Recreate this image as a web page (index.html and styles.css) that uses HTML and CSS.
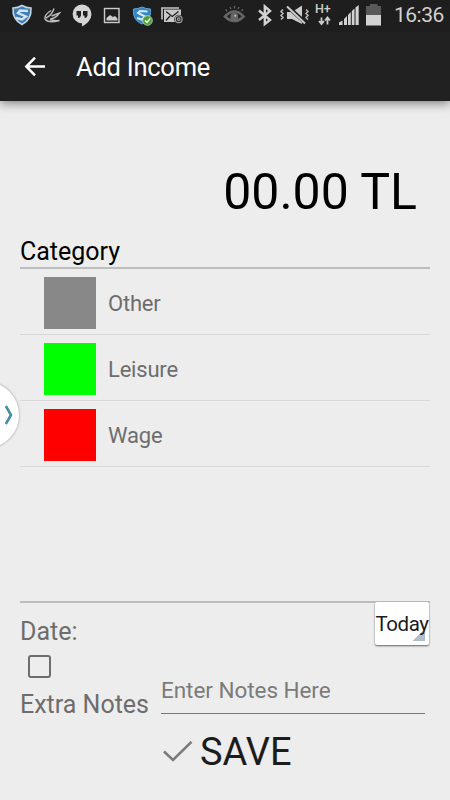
FILE: index.html
```
<!DOCTYPE html>
<html>
<head>
    <meta charset="utf-8">
    <title>Add Income</title>
    <link rel="stylesheet" href="styles.css">
</head>
<body>
    <div class="statusBar">
        <svg class="notifications" width="190" height="32" viewBox="0 0 190 32">
            <!-- shield -->
            <path d="M22 5.500Q26 8 31 8C31.500 16 29 21 22 24.500C15 21 12.500 16 13 8Q18 8 22 5.500Z" fill="#3c7db5" stroke="#c3d4df" stroke-width="1.600"/>
            <path d="M28 11L20 10.500L18 13L26 16.500L22 19.500L16 18" fill="none" stroke="#d5e2ea" stroke-width="2.400"/>
            <!-- bird -->
            <path d="M51 10.500Q44 15 45 19Q48 23.500 59.500 20.500Q53 21 50 19.500M46 18Q52 15 54 8.500M50.500 19Q56 18 59.500 13L51.500 16" fill="none" stroke="#bbb" stroke-width="1.400"/>
            <!-- hangouts -->
            <path d="M82 4.500A9.400 9.400 0 0 0 82 23.300V26.500C88 23.500 91.400 19 91.400 14A9.400 9.400 0 0 0 82 4.500Z" fill="#d4d4d4"/>
            <path d="M76.500 11H81V15.500Q80.500 18 78 18V15.500H76.500ZM83 11H87.500V15.500Q87 18 84.500 18V15.500H83Z" fill="#202020"/>
            <!-- image -->
            <rect x="104.500" y="8.500" width="14.500" height="14" fill="none" stroke="#ccc" stroke-width="1.400"/>
            <path d="M106.500 20.500V18L110 15L113 17L115 16L117.500 18.500V20.500Z" fill="#ccc"/>
            <!-- shield with tick -->
            <path d="M142 7Q146 9 150.500 9C151 16 149 21 142 24C135 21 133 16 133.500 9Q138 9 142 7Z" fill="#3185c9" stroke="#68a5d3"/>
            <path d="M147.500 11.500L140 11L138 13L145 16.500L142 19.500L137 18" fill="none" stroke="#dce9f2" stroke-width="2"/>
            <circle cx="147.500" cy="20.500" r="4.800" fill="#4d9e36" stroke="#c8dcc2" stroke-width=".8"/>
            <path d="M145 20.500L147 22.500L150.200 18.500" fill="none" stroke="#fff" stroke-width="1.400"/>
            <!-- mail -->
            <path d="M162 19.500V8H179" fill="none" stroke="#c8c8c8" stroke-width="1.600"/>
            <path d="M164 9.500H181V16L175 22H164Z" fill="#c8c8c8"/>
            <path d="M166 11.500L172.200 16.500L178.500 11.500M166 20.500L170 16" fill="none" stroke="#202020" stroke-width="1.300"/>
            <circle cx="178.700" cy="19.200" r="4.500" fill="#202020"/>
            <circle cx="178.700" cy="19.200" r="3.400" fill="none" stroke="#aaa" stroke-width="1.100"/>
            <circle cx="178.700" cy="19.200" r="1.300" fill="none" stroke="#aaa" stroke-width="1.100"/>
        </svg>
        <svg class="signals" width="170" height="32" viewBox="220 0 170 32">
            <!-- eye -->
            <path d="M225 16.500Q234.500 6.500 243.500 16.500Q234.500 25.500 225 16.500Z" fill="none" stroke="#666" stroke-width="2.600"/>
            <circle cx="234.300" cy="16.800" r="4" fill="#666"/>
            <circle cx="235.300" cy="15.800" r="1" fill="#ccc"/>
            <path d="M227 11L225.500 9.500M231 9L230 7M234.500 8.500V6M238 9L239 7M241.500 11L243 9.500" stroke="#666" stroke-width="1.300"/>
            <!-- bluetooth -->
            <path d="M259 10.500L270 20L264.800 24V6.500L270 11L259 20" fill="none" stroke="#d2d2d2" stroke-width="2.400"/>
            <!-- muted, vibrate -->
            <path d="M287 12H292L302 5.500V24L292 19H287Z" fill="#ccc"/>
            <path d="M286.500 5.500L305 22.500" stroke="#202020" stroke-width="4"/>
            <path d="M287 6.500L305 23.500" stroke="#ccc" stroke-width="2"/>
            <path d="M283 9.500L281 11.500L283 13.500L281 15.500L283 17.500L281 19.500M306 9.500L308 11.500L306 13.500L308 15.500L306 17.500L308 19.500" fill="none" stroke="#bbb" stroke-width="1.500"/>
            <!-- data arrows -->
            <path d="M321.500 17.500V23M319 21L321.500 24L324 21M327.500 24.500V18.500M325 20.500L327.500 17.500L330 20.500" fill="none" stroke="#ccc" stroke-width="1.800"/>
            <!-- reception -->
            <path d="M339 25V22.500L342.500 20.500V25ZM344 25V19L347 16V25ZM348 25V15L350.800 12V25ZM351.800 25V11L354.500 8.500V25ZM355.500 25V7.500L358.700 5V25Z" fill="#d2d2d2"/>
            <!-- battery -->
            <path d="M366 15V6H370V4H377.500V6H381V15Z" fill="#595959"/>
            <path d="M366 15H381V25.500H366Z" fill="#d2d2d2"/>
        </svg>
        <span class="network">H+</span>
        <span class="clock">16:36</span>
    </div>
    <div class="toolbar">
        <svg class="back" width="22" height="20" viewBox="0 0 22 20">
            <path d="M21 9.500H2.500M11 .7L2.300 9.500L11 18.300" fill="none" stroke="#fff" stroke-width="2.500"/>
        </svg>
        <h1>Add Income</h1>
    </div>

    <div class="content">
        <div class="amount">00.00 TL</div>
        <h2>Category</h2>
        <ul class="categories">
            <li><span class="swatch other"></span><span class="name">Other</span></li>
            <li><span class="swatch leisure"></span><span class="name">Leisure</span></li>
            <li><span class="swatch wage"></span><span class="name">Wage</span></li>
        </ul>
        <div class="dateRow">
            <label>Date:</label>
            <button class="today">Today</button>
        </div>
        <span class="checkbox"></span>
        <div class="notesRow">
            <label>Extra Notes</label>
            <div class="notesInput">Enter Notes Here</div>
        </div>
        <div class="save">
            <svg width="30" height="22" viewBox="0 0 30 22">
                <path d="M1 10.500L10 19L28.500 .8" fill="none" stroke="#7b7b7b" stroke-width="2.500"/>
            </svg>
            <span>SAVE</span>
        </div>
    </div>

    <div class="drawerHandle">
        <svg width="8" height="20" viewBox="0 0 8 20">
            <path d="M.8 1L6 10L.8 19" fill="none" stroke="#438fa4" stroke-width="2.600"/>
        </svg>
    </div>
</body>
</html>
```
FILE: styles.css
```
body {
    position: relative;
    width: 450px;
    height: 800px;
    margin: 0;
    overflow: hidden;
    background: #ededed;
    color: #6d6d6d;
    font-family: Roboto, sans-serif;
}

.statusBar {
    position: relative;
    display: flex;
    height: 32px;
    background: #1e1e1e;
}
.signals {
    margin-left: 30px;
}
.network {
    position: absolute;
    top: 2px;
    left: 315px;
    color: #ccc;
    font-size: 12.5px;
    font-weight: 500;
    line-height: 14px;
}
.clock {
    margin-left: 4px;
    color: #d2d2d2;
    font-size: 21px;
    letter-spacing: -.5px;
    line-height: 31px;
}

.toolbar {
    display: flex;
    align-items: center;
    height: 69px;
    padding-left: 24px;
    background: #212121;
    box-shadow: 0 2px 10px rgba(0, 0, 0, .5);
}
.toolbar h1 {
    margin: 0 0 0 30px;
    color: #fff;
    font-size: 25.5px;
    font-weight: 400;
    letter-spacing: -.25px;
}

.content {
    padding: 61px 20px 0;
}
.amount {
    padding-right: 13px;
    color: #000;
    font-size: 50px;
    line-height: 60px;
    text-align: right;
}
h2 {
    height: 31px;
    margin: 14px 0 0;
    border-bottom: 2px solid #bdbdbd;
    color: #000;
    font-size: 25px;
    font-weight: 400;
    line-height: 32px;
}
.categories {
    height: 332px;
    margin: 0;
    padding: 0;
    border-bottom: 2px solid #bdbdbd;
    list-style: none;
}
.categories li {
    display: flex;
    align-items: center;
    height: 65px;
    padding-left: 24px;
    border-bottom: 1px solid #d8d8d8;
    font-size: 22px;
    letter-spacing: -.2px;
}
.swatch {
    width: 52px;
    height: 52px;
    margin: 2px 12px 0 0;
}
.name {
    padding-top: 3px;
}
.other {background: #888;}
.leisure {background: #0f0;}
.wage {background: #f00;}

.dateRow {
    display: flex;
    justify-content: space-between;
    height: 52px;
    font-size: 25px;
}
.dateRow label {
    padding-top: 14px;
}
.today {
    width: 54px;
    height: 43px;
    margin: -1px 1px 0 0;
    padding: 0;
    border: none;
    border-radius: 2px;
    background: linear-gradient(135deg, transparent 50%, #afbfcc 50%) 37px 26px / 13px 13px no-repeat #fff;
    box-shadow: 0 1px 2px rgba(0, 0, 0, .6);
    color: #1c1c1c;
    font-family: inherit;
    font-size: 20.5px;
    letter-spacing: -.4px;
    white-space: nowrap;
}
.checkbox {
    display: block;
    box-sizing: border-box;
    width: 23px;
    height: 23px;
    margin-left: 8px;
    border: 2px solid #6d6d6d;
    border-radius: 3px;
}
.notesRow {
    display: flex;
    height: 51px;
    font-size: 25px;
}
.notesRow label {
    width: 141px;
    padding-top: 12px;
}
.notesInput {
    width: 264px;
    height: 35px;
    border-bottom: 1px solid #777;
    color: #7b7b7b;
    font-size: 22.5px;
    letter-spacing: -.05px;
    line-height: 25px;
}
.save {
    display: flex;
    align-items: center;
    padding-left: 143px;
    color: #1c1c1c;
    font-size: 38px;
    line-height: 46px;
}
.save span {
    margin-left: 7px;
}

.drawerHandle {
    position: absolute;
    top: 382px;
    left: -46px;
    display: flex;
    align-items: center;
    justify-content: flex-end;
    box-sizing: border-box;
    width: 65px;
    height: 66px;
    padding-right: 6px;
    border-radius: 50%;
    background: #fff;
    box-shadow: 0 0 2px 1px rgba(0, 0, 0, .18);
}
```
